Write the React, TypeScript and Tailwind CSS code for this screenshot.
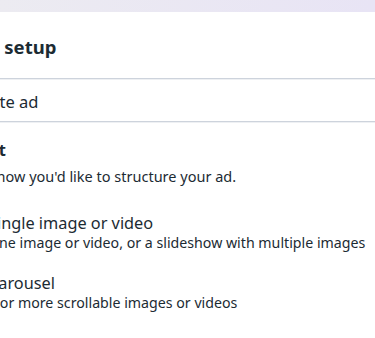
export default function App() {
  return (
    <div
      className="h-[338px] w-[375px] overflow-hidden bg-white text-[#1c2b33]"
      style={{ fontFamily: "'Noto Sans', Roboto, sans-serif" }}
    >
      <div className="h-3 bg-gradient-to-r from-[#ecebf1] to-[#e8e4f5]" />
      <div className="ml-[-40px] w-[415px]">
        <div className="flex h-[66px] items-center pl-[15px] pt-[3px]">
          <h1 className="text-[18.5px] font-bold">Ad setup</h1>
        </div>
        <div className="h-px bg-[#cdd3dc]" />
        <div className="h-px bg-[#eef0f3]" />
        <div className="flex h-[41px] items-center pl-[4px] pt-[4px]">
          <span className="text-[16.5px]">Create ad</span>
        </div>
        <div className="h-px bg-[#cdd3dc]" />
        <div className="h-px bg-[#eef0f3]" />
        <div className="border-b border-[#e8eaed] pb-[26px]">
          <div className="ml-[-18px] pt-[17px]">
            <h2 className="ml-[4px] text-[16.5px] font-bold leading-5">Format</h2>
            <p className="mt-[6px] text-[14.5px] leading-5">Choose how you'd like to structure your ad.</p>
          </div>
          <div className="mt-[27px] flex flex-col gap-[20px] pl-[28px]">
            <div>
              <div className="text-[16.3px] leading-5">Single image or video</div>
              <div className="text-[14.2px] leading-5">One image or video, or a slideshow with multiple images</div>
            </div>
            <div>
              <div className="text-[16.3px] leading-5">Carousel</div>
              <div className="text-[14.2px] leading-5">2 or more scrollable images or videos</div>
            </div>
          </div>
        </div>
      </div>
    </div>
  );
}
